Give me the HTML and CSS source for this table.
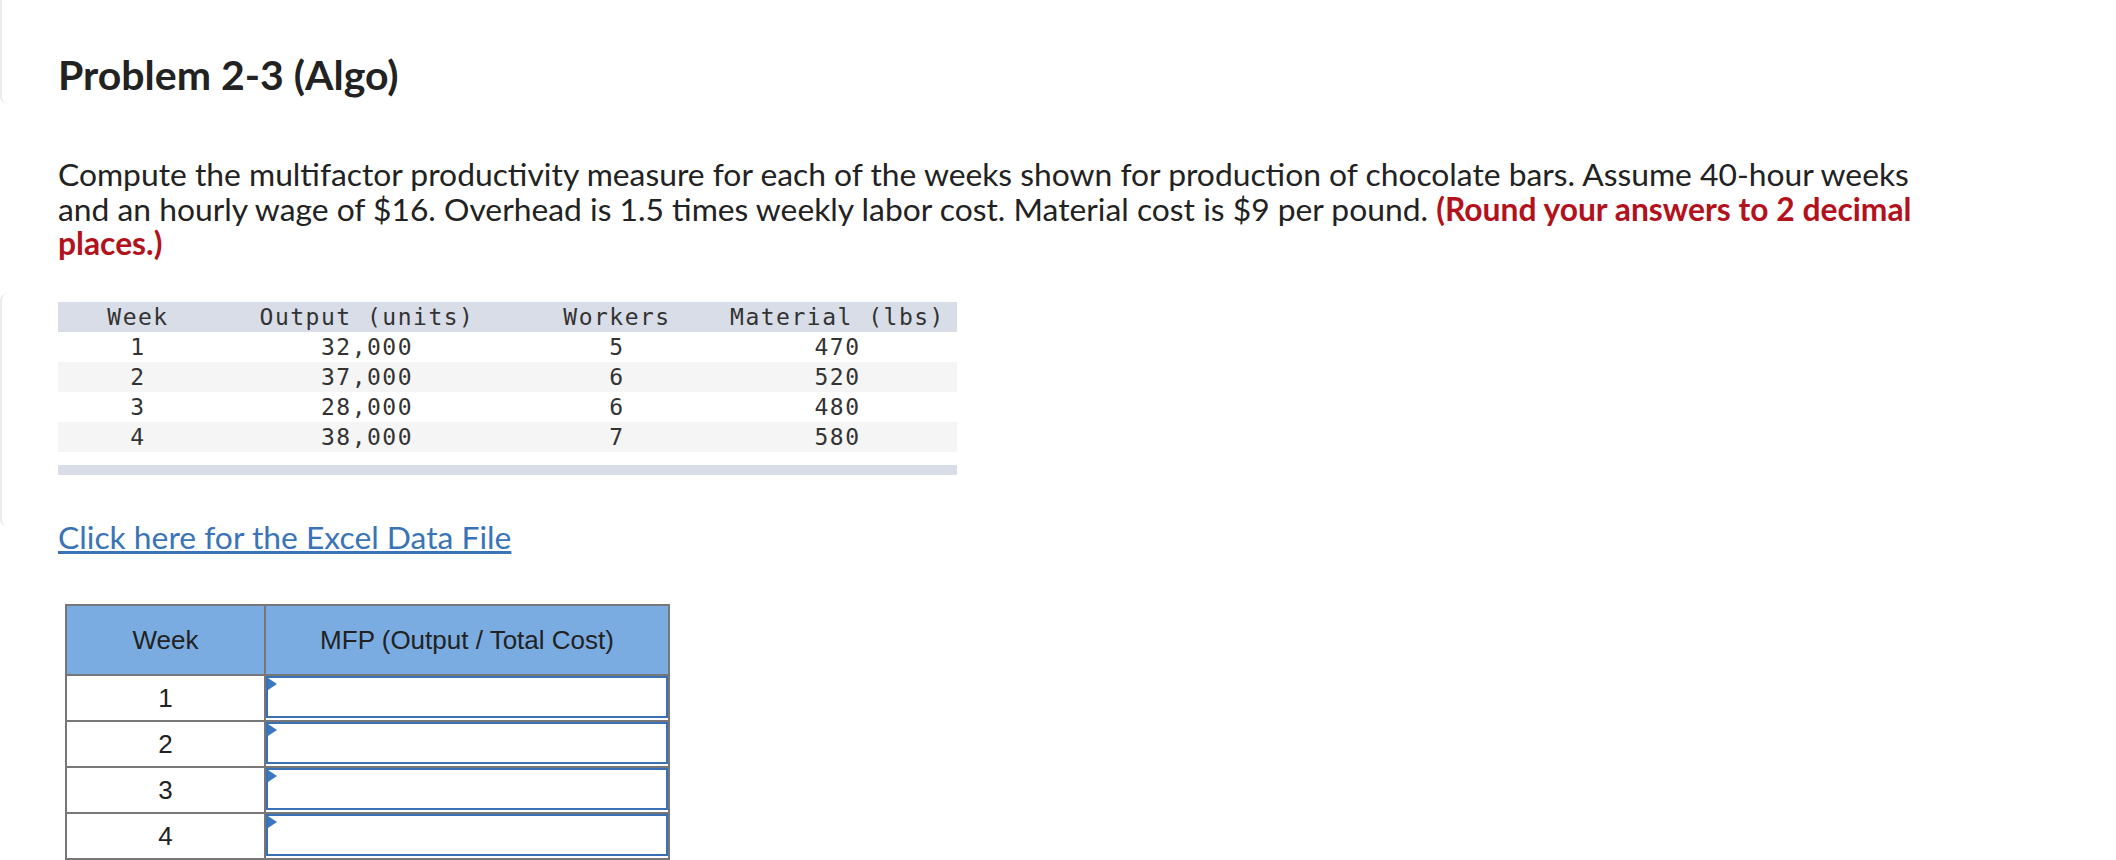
FILE: index.html
```html
<!DOCTYPE html>
<html lang="en">
<head>
<meta charset="utf-8">
<title>Problem 2-3 (Algo)</title>
<link rel="stylesheet" href="styles.css">
</head>
<body>
<header class="head-card">
  <h1 class="title">Problem 2-3 (Algo)</h1>
</header>

<p class="prompt">Compute the multifactor productivity measure for each of the weeks shown for production of chocolate bars. Assume 40-hour weeks and an hourly wage of $16. Overhead is 1.5 times weekly labor cost. Material cost is $9 per pound. <strong class="hint">(Round your answers to 2 decimal places.)</strong></p>

<section class="data-card">
  <div class="data-table">
    <div class="data-row head"><span>Week</span><span>Output (units)</span><span>Workers</span><span>Material (lbs)</span></div>
    <div class="data-row"><span>1</span><span>32,000</span><span>5</span><span>470</span></div>
    <div class="data-row alt"><span>2</span><span>37,000</span><span>6</span><span>520</span></div>
    <div class="data-row"><span>3</span><span>28,000</span><span>6</span><span>480</span></div>
    <div class="data-row alt"><span>4</span><span>38,000</span><span>7</span><span>580</span></div>
  </div>
  <div class="data-foot"></div>
</section>

<a class="excel-link" href="#">Click here for the Excel Data File</a>

<table class="answer">
  <thead>
    <tr><th class="col-week">Week</th><th class="col-mfp">MFP (Output / Total Cost)</th></tr>
  </thead>
  <tbody>
    <tr><td class="col-week">1</td><td class="col-mfp"><div class="answer-box"></div></td></tr>
    <tr><td class="col-week">2</td><td class="col-mfp"><div class="answer-box"></div></td></tr>
    <tr><td class="col-week">3</td><td class="col-mfp"><div class="answer-box"></div></td></tr>
    <tr><td class="col-week">4</td><td class="col-mfp"><div class="answer-box"></div></td></tr>
  </tbody>
</table>
</body>
</html>
```

FILE: styles.css
```css
* { box-sizing: border-box; }

html, body {
  margin: 0;
  background: #fff;
}

body {
  font-family: Lato, "Noto Sans", sans-serif;
  color: #222;
  width: 2116px;
  height: 860px;
  overflow: hidden;
}

.head-card {
  height: 104px;
  border-left: 2px solid #ebebeb;
  border-bottom-left-radius: 8px;
  padding: 53px 0 0 56px;
}

.title {
  margin: 0;
  font-size: 41px;
  line-height: 44px;
  font-weight: 700;
  color: #222;
}

.prompt {
  margin: 53px 0 0 58px;
  width: 1900px;
  font-size: 31.8px;
  line-height: 34.5px;
}

.hint {
  color: #b3121c;
  font-weight: 700;
}

.data-card {
  margin-top: 32px;
  height: 234px;
  border-left: 2px solid #ebebeb;
  border-radius: 8px 0 0 8px;
  padding: 9px 0 0 56px;
}

.data-table {
  width: 899px;
  font-family: "DejaVu Sans Mono", monospace;
  font-size: 23px;
  letter-spacing: 1.5px;
  color: #333;
}

.data-row {
  display: grid;
  grid-template-columns: 160px 298px 202px 239px;
  height: 30px;
  align-items: center;
  text-align: center;
}

.data-row.head { background: #d9dde7; }
.data-row.alt { background: #f5f5f5; }

.data-foot {
  width: 899px;
  height: 10px;
  margin-top: 13px;
  background: #d9dde7;
}

.excel-link {
  display: block;
  width: fit-content;
  margin: -7px 0 0 58px;
  font-size: 31.8px;
  line-height: 34.5px;
  color: #3a74b8;
  text-decoration: underline;
}

.answer {
  margin: 50px 0 0 65px;
  border-collapse: separate;
  border-spacing: 0;
  border-top: 2px solid #777;
  border-left: 2px solid #777;
  font-family: "Liberation Sans", Arial, sans-serif;
  font-size: 26px;
  color: #222;
}

.answer th,
.answer td {
  border-right: 2px solid #777;
  border-bottom: 2px solid #777;
  padding: 0;
  text-align: center;
  font-weight: 400;
}

.answer th {
  background: #7aace1;
  height: 70px;
}

.answer td { height: 46px; }
.answer td.col-mfp { vertical-align: top; }

.col-week { width: 199px; }
.col-mfp { width: 404px; }

.answer-box {
  position: relative;
  height: 42px;
  border: 2px solid #3a70b5;
  margin-bottom: 2px;
  background: #fff;
}

.answer-box::before {
  content: "";
  position: absolute;
  top: 0;
  left: 0;
  border-left: 9px solid #3a78c0;
  border-top: 6.5px solid transparent;
  border-bottom: 6.5px solid transparent;
}
```
